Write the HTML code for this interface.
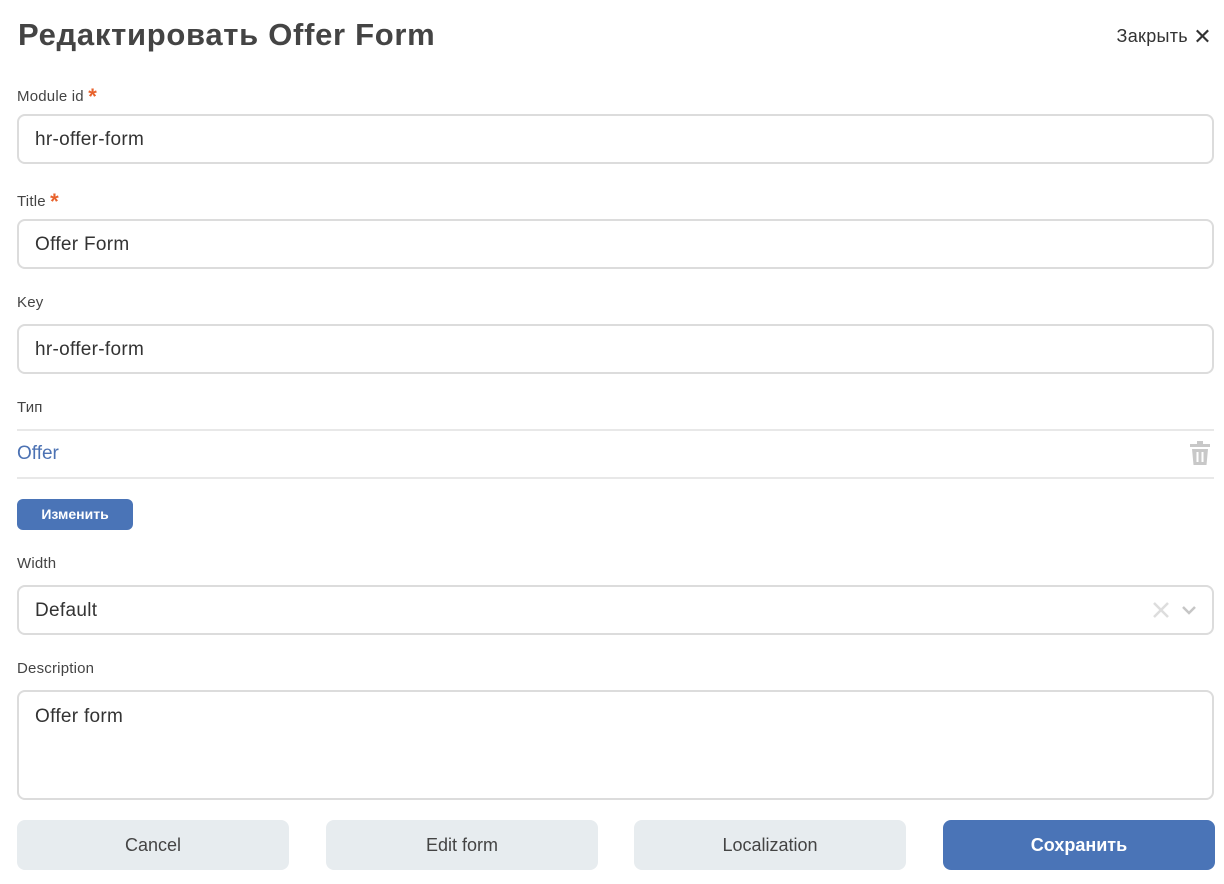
<!DOCTYPE html>
<html><head><meta charset="utf-8"><style>
*{box-sizing:border-box;margin:0;padding:0}
body{width:1224px;height:884px;background:#fff;font-family:"Liberation Sans","DejaVu Sans",sans-serif;color:#3a3a3a;position:relative;overflow:hidden}
.a{position:absolute}
h1{position:absolute;left:18px;top:17px;font-size:31px;font-weight:bold;color:#444;letter-spacing:0.7px}
.close{right:12px;top:24px;font-size:18px;color:#333;letter-spacing:0.3px}
.lbl{left:17px;font-size:15px;color:#444;letter-spacing:0.2px}
.star{color:#e8622c;font-size:22px;font-weight:bold;vertical-align:-3px}
.inp{left:17px;width:1197px;height:50px;border:2px solid #dcdcdc;border-radius:8px;padding-left:16px;font-size:19px;line-height:48px;color:#333;letter-spacing:0.3px}
.btn{top:820px;height:50px;width:272px;border-radius:8px;background:#e7ecef;font-size:18px;text-align:center;line-height:50px;color:#444}
</style></head><body>
<h1>Редактировать Offer Form</h1>
<div class="a close">Закрыть <span style="font-size:22px;vertical-align:-2px">✕</span></div>
<div class="a lbl" style="top:84px">Module id <span class="star">*</span></div>
<div class="a inp" style="top:114px">hr-offer-form</div>
<div class="a lbl" style="top:189px">Title <span class="star">*</span></div>
<div class="a inp" style="top:219px">Offer Form</div>
<div class="a lbl" style="top:294px">Key</div>
<div class="a inp" style="top:324px">hr-offer-form</div>
<div class="a lbl" style="top:399px">Тип</div>
<div class="a" style="left:17px;top:429px;width:1197px;height:2px;background:#e8e8e8"></div>
<div class="a" style="left:17px;top:443px;font-size:19px;color:#4c72b3">Offer</div>
<svg class="a" style="left:1189px;top:441px" width="22" height="26" viewBox="0 0 22 26"><rect x="1" y="3" width="20" height="3" fill="#c8c8c8"/><rect x="8" y="0" width="6" height="3" fill="#c8c8c8"/><path d="M3 8h16l-1.5 16h-13z" fill="#c8c8c8"/><rect x="7.5" y="11" width="2" height="10" fill="#fff"/><rect x="12.5" y="11" width="2" height="10" fill="#fff"/></svg>
<div class="a" style="left:17px;top:477px;width:1197px;height:2px;background:#e8e8e8"></div>
<div class="a" style="left:17px;top:499px;width:116px;height:31px;background:#4a74b7;border-radius:6px;color:#fff;font-weight:bold;font-size:14px;text-align:center;line-height:31px">Изменить</div>
<div class="a lbl" style="top:555px">Width</div>
<div class="a inp" style="top:585px">Default</div>
<svg class="a" style="left:1152px;top:601px" width="50" height="18" viewBox="0 0 50 18"><path d="M2 2l14 14M16 2L2 16" stroke="#ddd" stroke-width="2.5"/><path d="M31 6l6 6 6-6" stroke="#c6c6c6" stroke-width="2.5" fill="none"/></svg>
<div class="a lbl" style="top:660px">Description</div>
<div class="a inp" style="top:690px;height:110px;line-height:normal;padding-top:14px">Offer form</div>
<div class="a btn" style="left:17px">Cancel</div>
<div class="a btn" style="left:326px">Edit form</div>
<div class="a btn" style="left:634px">Localization</div>
<div class="a btn" style="left:943px;background:#4a74b7;color:#fff;font-weight:bold">Сохранить</div>
</body></html>
